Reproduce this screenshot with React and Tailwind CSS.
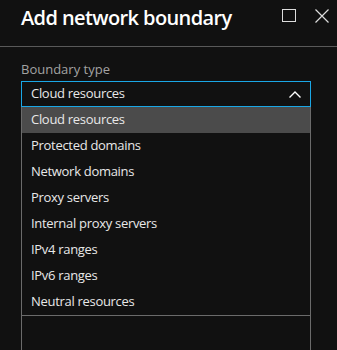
import React, { useState } from 'react';

const options = [
  'Cloud resources',
  'Protected domains',
  'Network domains',
  'Proxy servers',
  'Internal proxy servers',
  'IPv4 ranges',
  'IPv6 ranges',
  'Neutral resources',
];

const App = () => {
  const [selected, setSelected] = useState('Cloud resources');

  return (
    <div
      className="w-full h-[350px] overflow-hidden bg-[#111111] text-[#e8e8e8]"
      style={{ fontFamily: '"Open Sans", "Noto Sans", sans-serif' }}
    >
      <div className="h-[47px] border-b border-[#595959] flex items-start justify-between pl-[21px] pr-[8px] pt-[5px]">
        <h1 className="text-[20px] font-semibold leading-[26px] tracking-[-0.6px] text-white">Add network boundary</h1>
        <div className="flex items-center gap-[19px] pt-[4px]">
          <svg width="14" height="14" viewBox="0 0 14 14">
            <rect x="0.5" y="0.5" width="13" height="12" fill="none" stroke="#dddddd" strokeWidth="1" />
          </svg>
          <svg width="14" height="14" viewBox="0 0 14 14">
            <path d="M0.5 0.5 L13.5 13.5 M13.5 0.5 L0.5 13.5" fill="none" stroke="#dddddd" strokeWidth="1.2" />
          </svg>
        </div>
      </div>

      <div className="pl-[21px] pr-[26px]">
        <label className="block text-[13px] leading-[17px] text-[#a3a3a3] mt-[14px] mb-[3px]">Boundary type</label>
        <div className="h-[26px] border border-[#1aa7e6] flex items-center justify-between pl-[9px] pr-[9px] text-[13px] tracking-[-0.3px]">
          <span>{selected}</span>
          <svg width="12" height="7" viewBox="0 0 12 7">
            <polyline points="0.5,6.5 6,1 11.5,6.5" fill="none" stroke="#ffffff" strokeWidth="1.4" />
          </svg>
        </div>
        <ul className="border-x border-b border-[#6b6b6b]">
          {options.map((opt) => (
            <li
              key={opt}
              onClick={() => setSelected(opt)}
              className={`h-[26px] flex items-center pl-[9px] text-[13px] tracking-[-0.3px] ${
                opt === selected ? 'bg-[#4b4b4b]' : ''
              }`}
            >
              {opt}
            </li>
          ))}
        </ul>
        <div className="h-[40px] border-x border-[#6b6b6b]" />
      </div>
    </div>
  );
};

export default App;
